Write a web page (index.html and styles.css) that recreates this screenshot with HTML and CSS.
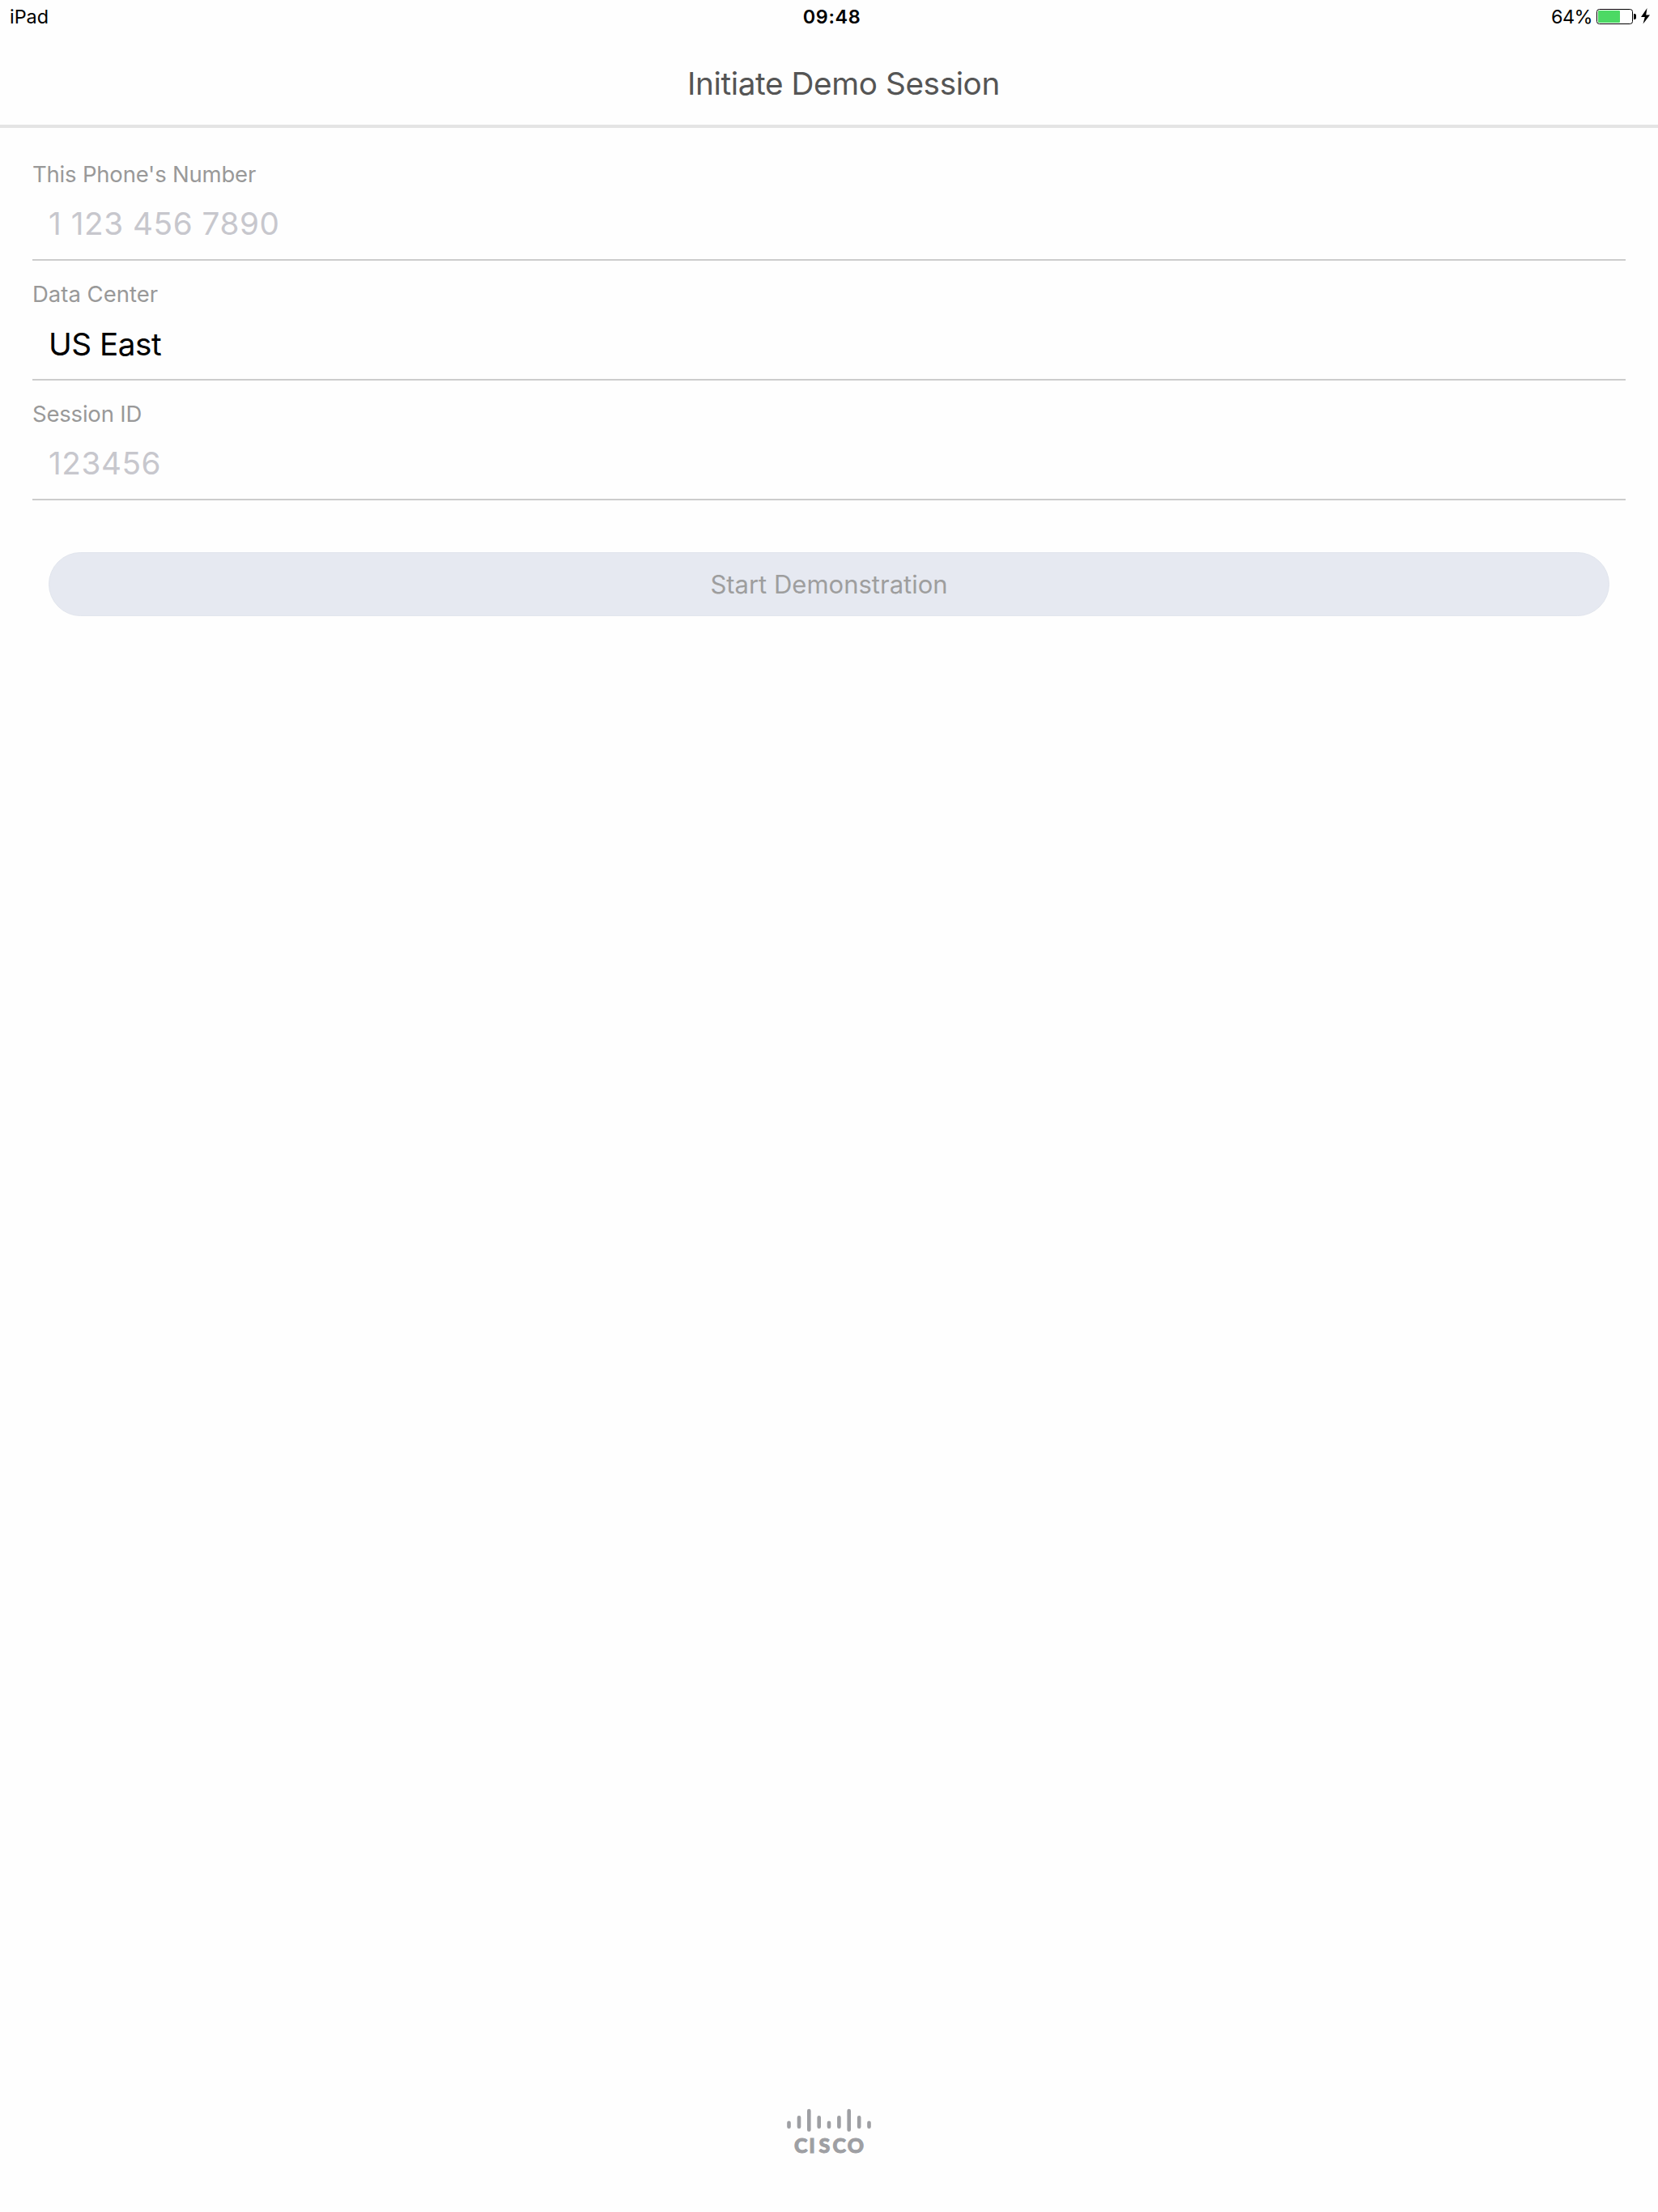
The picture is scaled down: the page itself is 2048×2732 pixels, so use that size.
FILE: index.html
```html
<!DOCTYPE html>
<html lang="en">
<head>
  <meta charset="utf-8">
  <title>Initiate Demo Session</title>
  <link rel="stylesheet" href="styles.css">
</head>
<body>
  <div class="status-bar">
    <span class="device">iPad</span>
    <span class="clock">09:48</span>
    <div class="battery">
      <span class="percent">64%</span>
      <svg class="battery-icon" width="69" height="22" viewBox="0 0 69 22">
        <rect x="1.5" y="1.5" width="44" height="18" rx="3" fill="none" stroke="#000" stroke-width="1"/>
        <rect x="3" y="3" width="27" height="15" rx="1" fill="#4cd964"/>
        <path d="M47 7h1a2 2 0 0 1 2 2v3a2 2 0 0 1-2 2h-1z" fill="#000"/>
        <path d="M63.5 0L56 11h4.8l-2.3 8.500L67 8.500h-4.800z" fill="#000"/>
      </svg>
    </div>
  </div>

  <header class="header">
    <h1>Initiate Demo Session</h1>
  </header>

  <form class="session-form">
    <div class="field">
      <label for="phone">This Phone's Number</label>
      <input type="text" id="phone" placeholder="1 123 456 7890">
    </div>
    <div class="field">
      <label class="center-label" for="data-center">Data Center</label>
      <input class="data-center" type="text" id="data-center" value="US East">
    </div>
    <div class="field">
      <label for="session-id">Session ID</label>
      <input type="text" id="session-id" placeholder="123456">
    </div>
    <button type="submit" disabled>Start Demonstration</button>
  </form>

  <footer class="footer">
    <svg class="logo" width="104" height="72" viewBox="0 0 104 72">
      <g stroke="#9e9fa3" stroke-width="4.6" stroke-linecap="round">
        <path d="M2.5 17.7v5M15 11.2v11.5M27.3 3v23.5M39.7 11.2v11.5M52 17.7v5M64.4 11.2v11.5M76.7 3v23.5M89.2 11.2v11.5M101.5 17.7v5"/>
      </g>
      <text class="logo-text" x="9 27.3 39.500 56.500 74.800" y="54.600">CISCO</text>
    </svg>
  </footer>
</body>
</html>
```

FILE: styles.css
```css
* {
  box-sizing: border-box;
}

body {
  display: flex;
  flex-direction: column;
  height: 2732px;
  margin: 0;
  font-family: Inter, "Liberation Sans", sans-serif;
  background-color: #fefefe;
}

/* Status bar */
.status-bar {
  display: grid;
  grid-template-columns: 1fr auto 1fr;
  align-items: center;
  height: 40px;
  padding: 2px 8px 0 12px;
  font-size: 23.4px;
  line-height: 38px;
  color: #000;
}

.clock {
  padding-left: 3px;
  font-weight: 600;
  letter-spacing: 0.6px;
}

.battery {
  display: flex;
  align-items: center;
  justify-content: flex-end;
  gap: 4px;
}

.percent {
  letter-spacing: -0.5px;
}

/* Title */
.header {
  height: 118px;
  padding-left: 36px;
  border-bottom: 4px solid #e4e4e4;
}

h1 {
  margin: 0;
  font-size: 38.7px;
  font-weight: 400;
  line-height: 126px;
  letter-spacing: -0.4px;
  text-align: center;
  color: #555;
}

/* Form */
.session-form {
  display: flex;
  flex-direction: column;
  padding: 16px 40px 0;
}

.field {
  display: flex;
  flex-direction: column;
  height: 148px;
  padding-top: 22px;
  border-bottom: 2px solid #ccc;
}

label {
  font-size: 27.5px;
  line-height: 38px;
  letter-spacing: -0.2px;
  color: #999;
}

.center-label {
  letter-spacing: 0;
}

input {
  height: 84px;
  padding: 0 20px;
  font-family: inherit;
  font-size: 38.7px;
  letter-spacing: 0.55px;
  color: #000;
  background: none;
  border: none;
  outline: none;
}

input::placeholder {
  color: #c7c7cd;
}

.data-center {
  padding-top: 2px;
  letter-spacing: -0.5px;
}

button {
  height: 79px;
  margin: 64px 20px 0;
  font-family: inherit;
  font-size: 31px;
  color: #9e9e9e;
  background-color: #e6e9f1;
  border: 1px solid #e1e5ed;
  border-radius: 40px;
}

/* Logo */
.footer {
  display: flex;
  justify-content: center;
  margin-top: auto;
  padding-bottom: 56px;
}

.logo-text {
  font-family: Lato, sans-serif;
  font-size: 25px;
  font-weight: 900;
  fill: #9e9fa3;
  stroke: #9e9fa3;
  stroke-width: 1px;
}
```
